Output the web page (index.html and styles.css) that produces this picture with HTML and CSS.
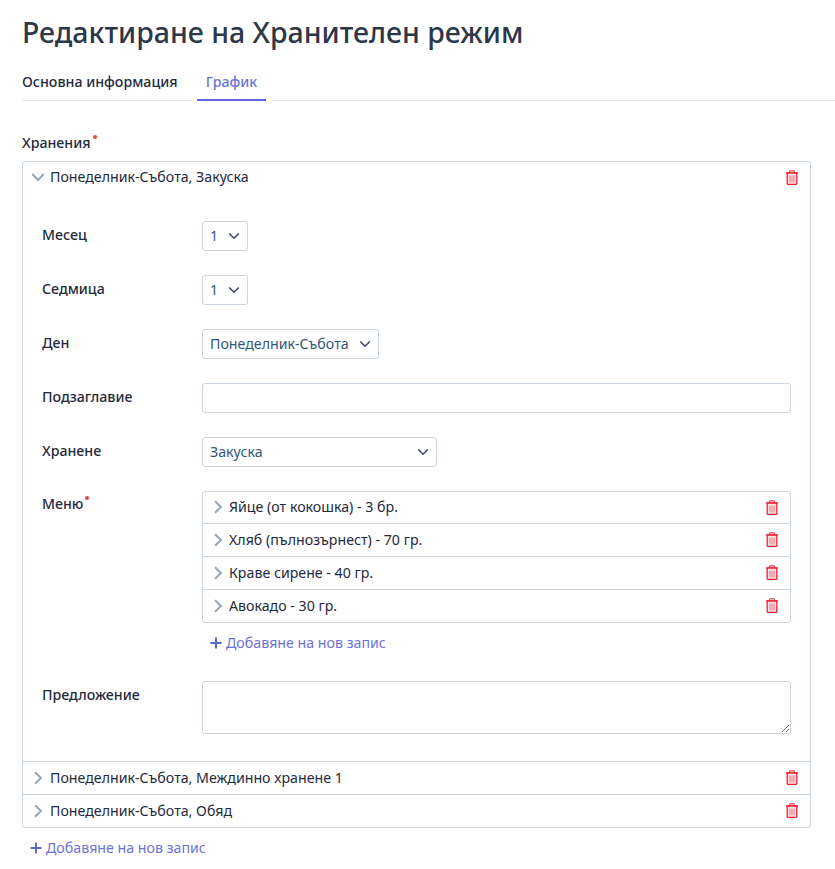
FILE: index.html
```html
<!DOCTYPE html>
<html lang="bg">
<head>
<meta charset="utf-8">
<title>Редактиране на Хранителен режим</title>
<link rel="stylesheet" href="styles.css">
</head>
<body>
<svg class="defs" width="0" height="0" aria-hidden="true">
  <symbol id="trash" viewBox="0 0 14 15">
    <path d="M4.700 2.600V.8h4.600v1.800" fill="none" stroke="currentColor" stroke-width="1"/>
    <path d="M1 3h12" fill="none" stroke="currentColor" stroke-width="1.200"/>
    <path d="M2.200 3h9.600v10.400a1 1 0 0 1-1 1H3.200a1 1 0 0 1-1-1z" fill="#fce6e8" stroke="currentColor" stroke-width="1.300"/>
    <path d="M5 5.500V12.500M7 5.500V12.500M9 5.500V12.500" fill="none" stroke="#f0707c" stroke-width="1"/>
  </symbol>
  <symbol id="chev-r" viewBox="0 0 10 14">
    <path d="M2 1.300 8 7l-6 5.700" fill="none" stroke="currentColor" stroke-width="1.900"/>
  </symbol>
  <symbol id="chev-d" viewBox="0 0 14 10">
    <path d="M1.300 2 7 8l5.700-6" fill="none" stroke="currentColor" stroke-width="1.900"/>
  </symbol>
  <symbol id="caret" viewBox="0 0 12 8">
    <path d="M1.200 1.500 6 6.200l4.800-4.700" fill="none" stroke="currentColor" stroke-width="1.600"/>
  </symbol>
  <symbol id="plus" viewBox="0 0 12 12">
    <path d="M6 .5v11M.5 6h11" fill="none" stroke="currentColor" stroke-width="2"/>
  </symbol>
</svg>

<main class="page">
  <h1 class="title">Редактиране на Хранителен режим</h1>

  <nav class="tabs">
    <a class="tab tab-first">Основна информация</a>
    <a class="tab tab-active">График</a>
    <span class="tab-rest"></span>
  </nav>

  <div class="field-label">Хранения<span class="req"></span></div>

  <section class="accordion">
    <div class="acc-item">
      <div class="acc-head acc-head-open">
        <svg class="chev-down"><use href="#chev-d"/></svg>
        <span class="acc-title">Понеделник-Събота, Закуска</span>
        <svg class="trash"><use href="#trash"/></svg>
      </div>
      <div class="acc-body">
        <div class="row">
          <label class="row-label">Месец</label>
          <div class="select w-small"><span class="select-text">1</span><svg class="caret"><use href="#caret"/></svg></div>
        </div>
        <div class="row">
          <label class="row-label">Седмица</label>
          <div class="select w-small"><span class="select-text">1</span><svg class="caret"><use href="#caret"/></svg></div>
        </div>
        <div class="row">
          <label class="row-label">Ден</label>
          <div class="select w-day"><span class="select-text">Понеделник-Събота</span><svg class="caret"><use href="#caret"/></svg></div>
        </div>
        <div class="row">
          <label class="row-label">Подзаглавие</label>
          <input class="input" type="text">
        </div>
        <div class="row">
          <label class="row-label">Хранене</label>
          <div class="select w-meal"><span class="select-text">Закуска</span><svg class="caret"><use href="#caret"/></svg></div>
        </div>
        <div class="row row-menu">
          <label class="row-label">Меню<span class="req"></span></label>
          <div class="row-control">
            <div class="list">
              <div class="list-item"><svg class="chev-right"><use href="#chev-r"/></svg><span class="acc-title">Яйце (от кокошка) - 3 бр.</span><svg class="trash"><use href="#trash"/></svg></div>
              <div class="list-item"><svg class="chev-right"><use href="#chev-r"/></svg><span class="acc-title">Хляб (пълнозърнест) - 70 гр.</span><svg class="trash"><use href="#trash"/></svg></div>
              <div class="list-item"><svg class="chev-right"><use href="#chev-r"/></svg><span class="acc-title">Краве сирене - 40 гр.</span><svg class="trash"><use href="#trash"/></svg></div>
              <div class="list-item"><svg class="chev-right"><use href="#chev-r"/></svg><span class="acc-title">Авокадо - 30 гр.</span><svg class="trash"><use href="#trash"/></svg></div>
            </div>
            <a class="add add-inner"><svg class="plus"><use href="#plus"/></svg>Добавяне на нов запис</a>
          </div>
        </div>
        <div class="row row-last">
          <label class="row-label">Предложение</label>
          <textarea class="textarea"></textarea>
        </div>
      </div>
    </div>
    <div class="acc-item acc-closed">
      <div class="acc-head">
        <svg class="chev-right chev-outer"><use href="#chev-r"/></svg>
        <span class="acc-title">Понеделник-Събота, Междинно хранене 1</span>
        <svg class="trash"><use href="#trash"/></svg>
      </div>
    </div>
    <div class="acc-item acc-closed">
      <div class="acc-head">
        <svg class="chev-right chev-outer"><use href="#chev-r"/></svg>
        <span class="acc-title">Понеделник-Събота, Обяд</span>
        <svg class="trash"><use href="#trash"/></svg>
      </div>
    </div>
  </section>

  <a class="add add-outer"><svg class="plus"><use href="#plus"/></svg>Добавяне на нов запис</a>
</main>
</body>
</html>
```

FILE: styles.css
```css
* { box-sizing: border-box; }

html, body {
  margin: 0;
  padding: 0;
  background: #fff;
}

body {
  font-family: "Noto Sans", "Open Sans", sans-serif;
  font-size: 14.2px;
  line-height: 20px;
  color: #1f2a3c;
  overflow: hidden;
}

.defs { position: absolute; }

.page {
  height: 869px;
  padding: 12px 24px 0 22px;
  overflow: hidden;
}

.title {
  margin: 0;
  font-size: 28.5px;
  line-height: 40px;
  font-weight: 500;
  color: #2d3748;
}

.tabs {
  display: flex;
  margin: 11px -24px 0 0;
  height: 38px;
}

.tab {
  display: block;
  height: 38px;
  line-height: 38px;
  font-weight: 500;
  border-bottom: 1px solid #e2e8f0;
  white-space: nowrap;
}

.tab-first {
  width: 170px;
  color: #1f2a3c;
}

.tab-active {
  width: 69px;
  margin: 0 5px;
  text-align: center;
  color: #6c72dc;
  border-bottom: 2px solid #5a67d8;
}

.tab-rest {
  flex: 1;
  height: 38px;
  border-bottom: 1px solid #e2e8f0;
}

.field-label {
  margin-top: 32px;
  height: 20px;
  font-weight: 500;
  color: #1f2a3c;
}

.req {
  display: inline-block;
  width: 4px;
  height: 4px;
  margin-left: 2px;
  border-radius: 50%;
  background: #ef4444;
  vertical-align: 9px;
}

.accordion {
  margin-top: 8px;
  width: 789px;
  border: 1px solid #cbd5e0;
  border-radius: 3px;
}

.acc-item + .acc-item {
  border-top: 1px solid #cbd5e0;
}

.acc-head {
  display: flex;
  align-items: center;
  height: 32px;
  padding: 0 11px 0 8px;
}

.acc-head-open {
  padding-bottom: 2px;
}

.acc-title {
  flex: 1;
  color: #1f2a3c;
  white-space: nowrap;
}

.chev-down {
  width: 14px;
  height: 10px;
  margin-right: 5px;
  color: #94a3b8;
}

.chev-right {
  width: 10px;
  height: 14px;
  margin-right: 6px;
  color: #94a3b8;
}

.chev-outer {
  margin-left: 2px;
  margin-right: 7px;
}

.trash {
  width: 14px;
  height: 15px;
  color: #f0222f;
}

.acc-closed .trash,
.list-item + .list-item .trash {
  margin-top: -2px;
}

.acc-body {
  padding: 27px 19px 27px 19px;
}

.row {
  display: flex;
  align-items: flex-start;
  margin-bottom: 24px;
}

.row-last { margin-bottom: 0; }

.row-menu { margin-bottom: 28px; }

.row-label {
  width: 160px;
  flex: none;
  padding-top: 4px;
  font-weight: 500;
  color: #1f2a3c;
}

.row-menu .row-label { padding-top: 3px; }

.row-control {
  flex: 1;
  min-width: 0;
}

.select {
  display: flex;
  align-items: center;
  justify-content: space-between;
  height: 30px;
  padding: 0 7px;
  background: #fff;
  border: 1px solid #cbd5e0;
  border-radius: 3px;
}

.select-text {
  color: #34567a;
  white-space: nowrap;
}

.caret {
  width: 12px;
  height: 8px;
  color: #3d4a5c;
  flex: none;
}

.w-small { width: 46px; }
.w-day { width: 177px; }
.w-meal { width: 235px; }

.input {
  display: block;
  flex: 1;
  min-width: 0;
  height: 30px;
  border: 1px solid #cbd5e0;
  border-radius: 3px;
  background: #fff;
  outline: 0;
}

.textarea {
  display: block;
  flex: 1;
  min-width: 0;
  height: 53px;
  margin: 0;
  border: 1px solid #cbd5e0;
  border-radius: 3px;
  background: #fff;
  outline: 0;
}

.list {
  border: 1px solid #cbd5e0;
  border-radius: 3px;
}

.list-item {
  display: flex;
  align-items: center;
  height: 33px;
  padding: 0 11px 0 10px;
}

.list-item:first-child {
  height: 31px;
  padding-bottom: 1px;
}

.list-item + .list-item { border-top: 1px solid #cbd5e0; }

.add {
  display: flex;
  align-items: center;
  color: #6c72dc;
  font-weight: 400;
  white-space: nowrap;
}

.plus {
  width: 12px;
  height: 12px;
  margin-right: 4px;
  color: #5a67d8;
}

.add-inner {
  margin: 10px 0 0 8px;
}

.add-outer {
  margin: 10px 0 0 8px;
}
```
